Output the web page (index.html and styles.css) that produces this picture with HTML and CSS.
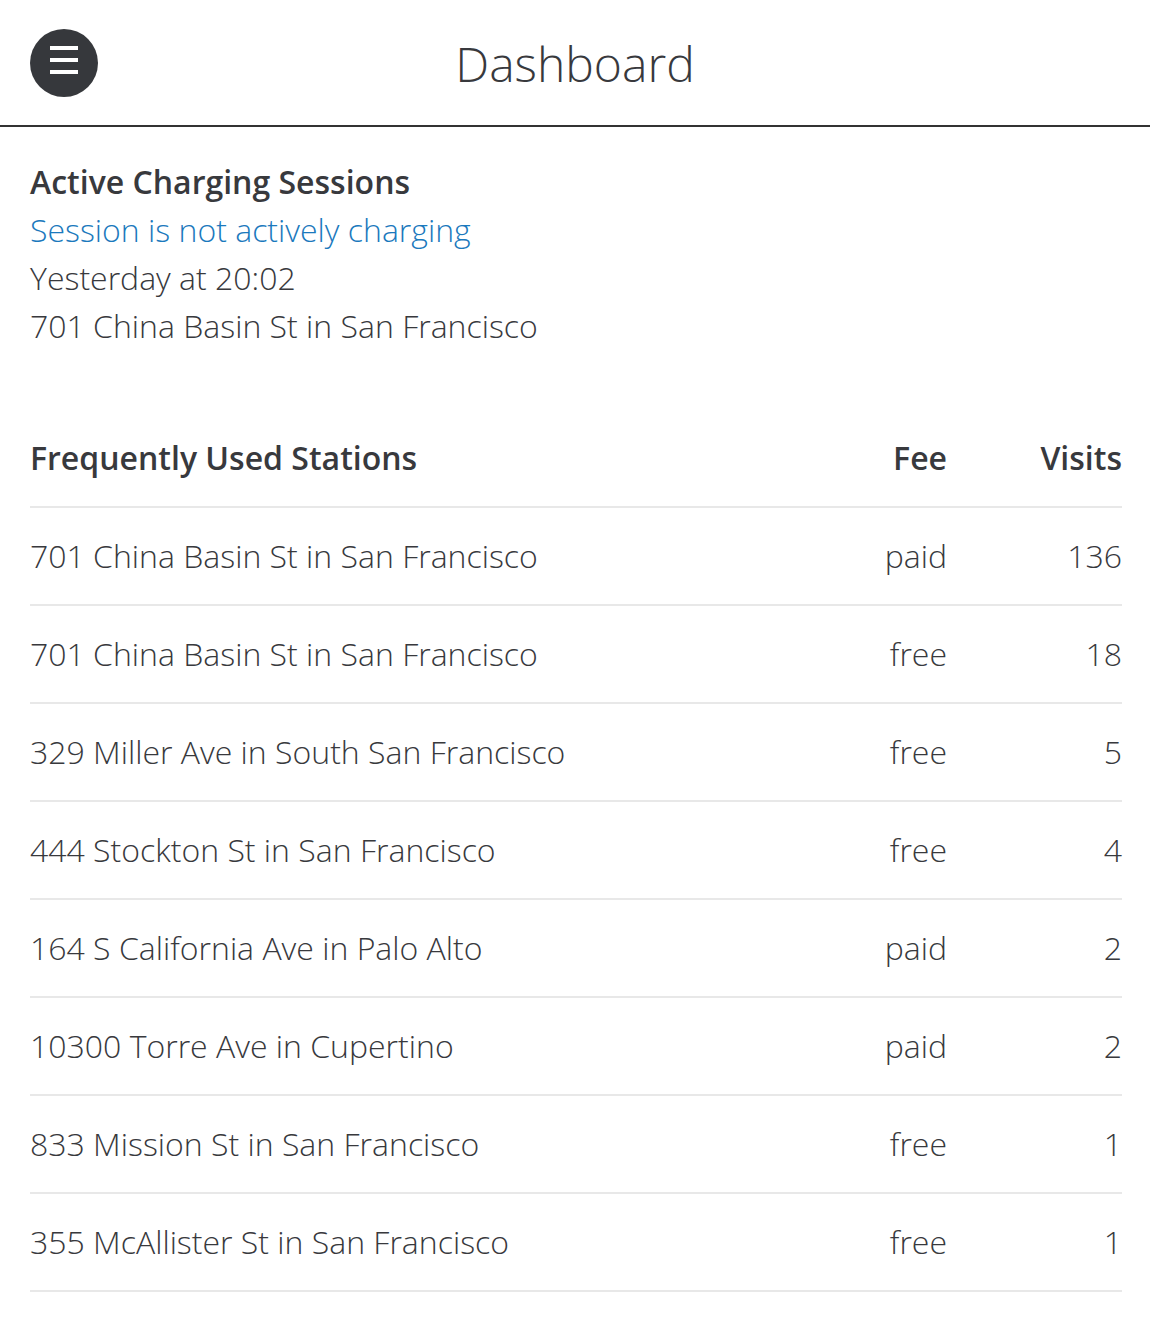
FILE: index.html
```html
<!DOCTYPE html>
<html lang="en">
<head>
<meta charset="utf-8">
<title>Dashboard</title>
<link rel="stylesheet" href="styles.css">
</head>
<body>
<header class="topbar">
  <div class="topbar-left">
    <button class="menu-btn" aria-label="Menu">
      <svg width="68" height="68" viewBox="0 0 68 68">
        <circle cx="34" cy="34" r="34" fill="#36383c"/>
        <rect x="20" y="17" width="28" height="4" fill="#fff"/>
        <rect x="20" y="29" width="28" height="4" fill="#fff"/>
        <rect x="20" y="41" width="28" height="4" fill="#fff"/>
      </svg>
    </button>
  </div>
  <h1 class="title">Dashboard</h1>
  <div class="topbar-right"></div>
</header>
<main class="content">
  <section class="session">
    <h2 class="session-title">Active Charging Sessions</h2>
    <div class="session-status">Session is not actively charging</div>
    <div class="session-line">Yesterday at 20:02</div>
    <div class="session-line">701 China Basin St in San Francisco</div>
  </section>
  <table class="stations">
    <thead>
      <tr>
        <th class="col-name">Frequently Used Stations</th>
        <th class="col-fee">Fee</th>
        <th class="col-visits">Visits</th>
      </tr>
    </thead>
    <tbody>
      <tr><td class="col-name">701 China Basin St in San Francisco</td><td class="col-fee">paid</td><td class="col-visits">136</td></tr>
      <tr><td class="col-name">701 China Basin St in San Francisco</td><td class="col-fee">free</td><td class="col-visits">18</td></tr>
      <tr><td class="col-name">329 Miller Ave in South San Francisco</td><td class="col-fee">free</td><td class="col-visits">5</td></tr>
      <tr><td class="col-name">444 Stockton St in San Francisco</td><td class="col-fee">free</td><td class="col-visits">4</td></tr>
      <tr><td class="col-name">164 S California Ave in Palo Alto</td><td class="col-fee">paid</td><td class="col-visits">2</td></tr>
      <tr><td class="col-name">10300 Torre Ave in Cupertino</td><td class="col-fee">paid</td><td class="col-visits">2</td></tr>
      <tr><td class="col-name">833 Mission St in San Francisco</td><td class="col-fee">free</td><td class="col-visits">1</td></tr>
      <tr><td class="col-name">355 McAllister St in San Francisco</td><td class="col-fee">free</td><td class="col-visits">1</td></tr>
    </tbody>
  </table>
</main>
</body>
</html>
```

FILE: styles.css
```css
html, body {
  margin: 0;
  padding: 0;
  background: #fff;
}
body {
  font-family: "Open Sans", "Noto Sans", "Liberation Sans", sans-serif;
  color: #38393d;
  font-weight: 300;
}
.topbar {
  display: grid;
  grid-template-columns: 1fr auto 1fr;
  align-items: center;
  height: 125px;
  border-bottom: 2px solid #333;
}
.topbar-left {
  padding-left: 30px;
  display: flex;
  align-items: center;
}
.menu-btn {
  border: 0;
  padding: 0;
  margin: 0;
  background: none;
  width: 68px;
  height: 68px;
  display: block;
  cursor: pointer;
}
.menu-btn svg {
  display: block;
}
.title {
  margin: 0;
  font-size: 48px;
  font-weight: 300;
  color: #38393d;
  line-height: 1;
  padding-top: 2px;
}
.content {
  padding: 31px 28px 0 30px;
}
.session {
  font-size: 32px;
  line-height: 48px;
}
.session-title {
  margin: 0;
  font-size: 32px;
  font-weight: 600;
  line-height: 48px;
}
.session-status {
  color: #1b79bd;
}
.stations {
  width: 100%;
  border-collapse: collapse;
  margin-top: 60px;
  font-size: 32px;
}
.stations th,
.stations td {
  height: 96px;
  padding: 0;
  border-bottom: 2px solid #e8e8e8;
  vertical-align: middle;
  line-height: 48px;
}
.stations th {
  font-weight: 600;
}
.col-name {
  text-align: left;
}
.col-fee {
  text-align: right;
  width: 200px;
}
.col-visits {
  text-align: right;
  width: 175px;
}
```
